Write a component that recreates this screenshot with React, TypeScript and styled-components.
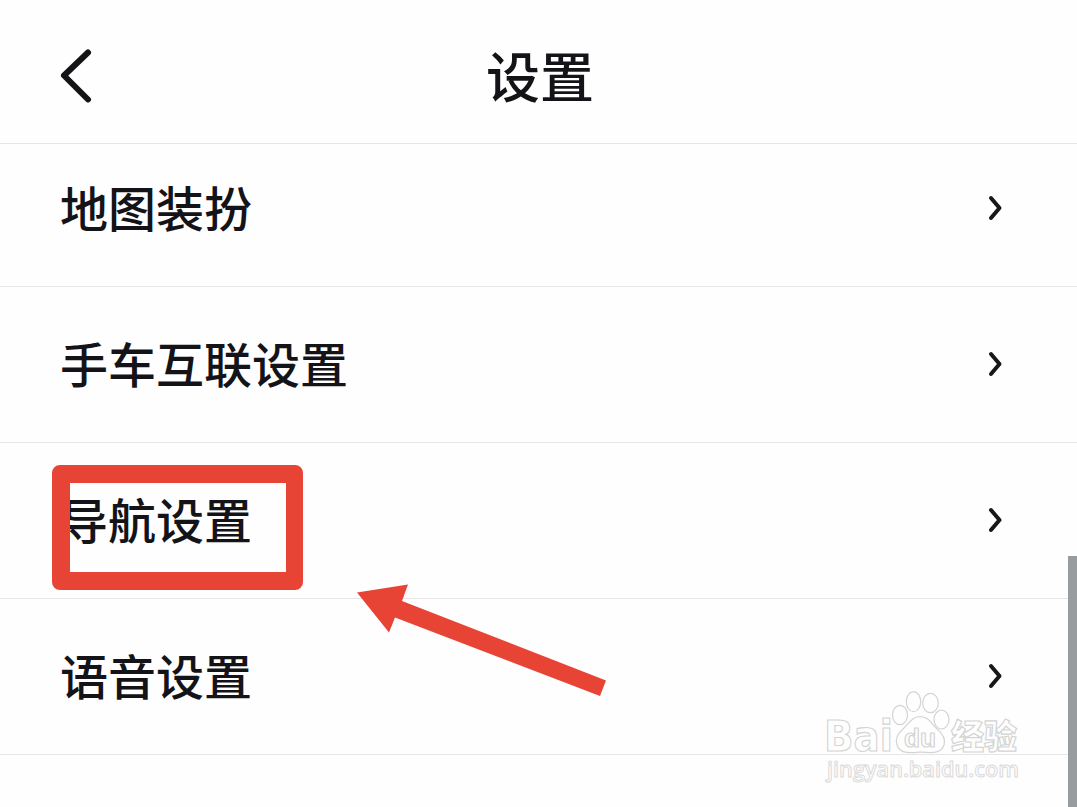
import React from "react";
import styled, { createGlobalStyle } from "styled-components";

const rows = ["地图装扮", "手车互联设置", "导航设置", "语音设置"];

export default function App() {
  return (
    <>
      <GlobalStyle />
      <Screen>
        <Header>
          <BackButton aria-label="返回">
            <BackIcon viewBox="0 0 36 60">
              <path d="M30 6.5 L6 29.5 L30 53.5" />
            </BackIcon>
          </BackButton>
          <Title>设置</Title>
        </Header>
        <List>
          {rows.map((label, index) => (
            <Row key={label} $first={index === 0}>
              <LabelBox>
                <Label>{label}</Label>
                {label === "导航设置" && <Highlight />}
              </LabelBox>
              <Chevron viewBox="0 0 20 30">
                <path d="M6 5 L14.5 15 L6 25" />
              </Chevron>
            </Row>
          ))}
        </List>
        <Arrow viewBox="0 0 260 120">
          <polygon points="7,22.5 58,14.5 52,31 256,110.5 250,126 45,47.5 39,62.5" />
        </Arrow>
        <Watermark />
        <ScrollThumb />
      </Screen>
    </>
  );
}

function Watermark() {
  return (
    <Mark viewBox="0 0 210 110">
      <Brand x="4" y="61" fontSize="43" textLength="69" lengthAdjust="spacingAndGlyphs">
        Bai
      </Brand>
      <ellipse cx="80" cy="25" rx="7.5" ry="9.7" />
      <ellipse cx="93.5" cy="11.7" rx="7.2" ry="10" />
      <ellipse cx="110.5" cy="13" rx="7.8" ry="9.7" />
      <ellipse cx="121.5" cy="29.5" rx="7.5" ry="9.5" />
      <path d="M100 26.5 C91 27 89 34 83 39 C77 44 75 49 77 55 C80 64 89 63 100 62 C112 63 121 64 124 55 C126 48 122 43 117 39 C111 34 110 27 100 26.5 Z" />
      <Du x="84" y="57" fontSize="26" textLength="32" lengthAdjust="spacingAndGlyphs">
        du
      </Du>
      <text x="131" y="59" fontSize="34" fontWeight="900" textLength="66" lengthAdjust="spacingAndGlyphs">
        经验
      </text>
      <Url x="7" y="87" fontSize="22" textLength="192" lengthAdjust="spacingAndGlyphs">
        jingyan.baidu.com
      </Url>
    </Mark>
  );
}

const GlobalStyle = createGlobalStyle`
  * {
    box-sizing: border-box;
  }

  body {
    margin: 0;
    background-color: #fefefe;
    font-family: "Noto Sans CJK SC", sans-serif;
    overflow: hidden;
  }
`;

const Screen = styled.div`
  position: relative;
  width: 1077px;
  height: 807px;
  overflow: hidden;
  color: #141418;
`;

const Header = styled.header`
  height: 144px;
  padding: 0 55px 0 58px;
  display: grid;
  grid-template-columns: 60px 1fr 60px;
  align-items: center;
  border-bottom: 1px solid #e6e6e6;
`;

const BackButton = styled.button`
  width: 36px;
  height: 60px;
  margin-bottom: -9px;
  padding: 0;
  border: 0;
  background: none;
`;

const BackIcon = styled.svg`
  display: block;
  width: 36px;
  height: 60px;
  fill: none;
  stroke: #141416;
  stroke-width: 6;
  stroke-linecap: round;
  stroke-linejoin: round;
`;

const Title = styled.h1`
  width: 108px;
  margin: 0;
  padding-top: 6px;
  justify-self: center;
  white-space: nowrap;
  font-size: 54px;
  font-weight: 500;
  line-height: 76px;
`;

const List = styled.div`
  display: flex;
  flex-direction: column;
`;

const Row = styled.div<{ $first: boolean }>`
  height: ${({ $first }) => ($first ? "143px" : "156px")};
  padding: 0 72px ${({ $first }) => ($first ? "15px" : "2px")} 60px;
  display: flex;
  align-items: center;
  justify-content: space-between;
  border-bottom: 1px solid #e6e6e6;
`;

const LabelBox = styled.div`
  position: relative;
`;

const Label = styled.div`
  padding-bottom: 4px;
  font-size: 48px;
  font-weight: 500;
  line-height: 70px;
`;

const Highlight = styled.div`
  position: absolute;
  top: -18px;
  left: -8px;
  width: 251px;
  height: 125px;
  border: 18px solid #e84435;
  border-right-width: 17px;
  border-radius: 8px;
`;

const Chevron = styled.svg`
  width: 20px;
  height: 30px;
  fill: none;
  stroke: #18181a;
  stroke-width: 4;
  stroke-linecap: round;
  stroke-linejoin: round;
`;

const Arrow = styled.svg`
  position: absolute;
  top: 570px;
  left: 350px;
  width: 260px;
  height: 120px;
  overflow: visible;
  fill: #e84435;
`;

const Mark = styled.svg`
  position: absolute;
  top: 690px;
  left: 820px;
  width: 210px;
  height: 110px;
  fill: #fefefe;
  stroke: #d4d4d4;
  stroke-width: 1.2;
  font-family: "Open Sans", "Noto Sans CJK SC", sans-serif;
`;

const Brand = styled.text`
  font-family: "DejaVu Sans", sans-serif;
  font-weight: 700;
`;

const Du = styled.text`
  font-family: "Liberation Sans", Arial, sans-serif;
  font-weight: 700;
`;

const Url = styled.text`
  font-weight: 600;
  stroke: #dadada;
  stroke-width: 1;
`;

const ScrollThumb = styled.div`
  position: absolute;
  top: 556px;
  right: 0;
  width: 9px;
  height: 251px;
  background-color: #999c9e;
`;
